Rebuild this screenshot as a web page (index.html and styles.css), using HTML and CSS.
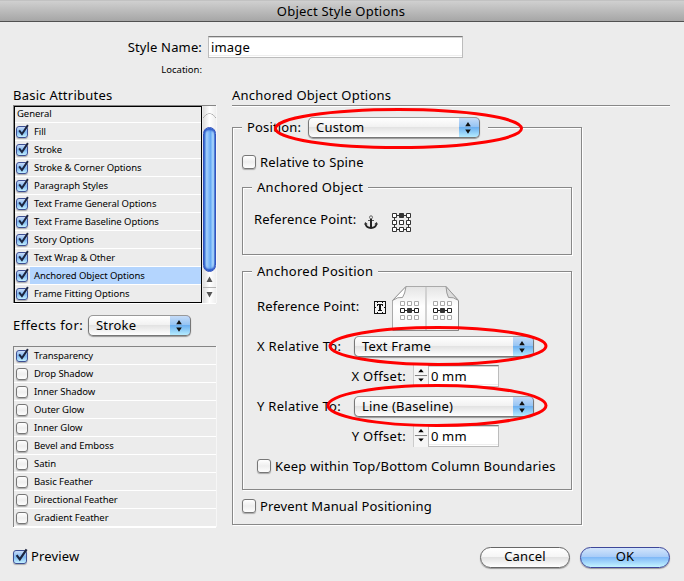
FILE: index.html
```html
<!DOCTYPE html>
<html lang="en">
<head>
<meta charset="utf-8">
<title>Object Style Options</title>
<link rel="stylesheet" href="styles.css">
</head>
<body>
<svg class="defs" width="0" height="0" aria-hidden="true">
  <defs>
    <linearGradient id="page" x1="0" y1="0" x2="0" y2="1"><stop offset="0" stop-color="#e4e4e4"/><stop offset=".45" stop-color="#fff"/><stop offset="1" stop-color="#f4f4f4"/></linearGradient>
    <symbol id="tick" viewBox="0 0 16 16"><path d="M3.6 7.200 6.800 11.400 13.600 1.300" fill="none" stroke="#1c2540" stroke-width="2.200"/></symbol>
    <symbol id="arrows" viewBox="0 0 20 20"><path d="M10 4l2.800 4.200H7.200zM10 15.800l2.800-4.200H7.200z" fill="#111"/></symbol>
    <symbol id="steps" viewBox="0 0 15 22"><path d="M7.500 3.500l2.900 3.400H4.600zM7.500 17l2.900-3.400H4.600z" fill="#000"/><path d="M1 10.500h13" stroke="#777"/></symbol>
  </defs>
</svg>
<header class="titlebar">Object Style Options</header>
<main class="dialog">
  <section class="naming">
    <label class="name-label">Style Name:</label><div class="field name-field">image</div>
    <span class="location">Location:</span>
  </section>
  <div class="columns">
    <aside class="side">
      <h2>Basic Attributes</h2>
      <div class="well attributes">
        <ul class="list focus">
          <li class="general">General</li>
          <li><i class="check small on"><svg><use href="#tick"/></svg></i><span>Fill</span></li>
          <li><i class="check small on"><svg><use href="#tick"/></svg></i><span>Stroke</span></li>
          <li><i class="check small on"><svg><use href="#tick"/></svg></i><span>Stroke &amp; Corner Options</span></li>
          <li><i class="check small on"><svg><use href="#tick"/></svg></i><span>Paragraph Styles</span></li>
          <li><i class="check small on"><svg><use href="#tick"/></svg></i><span>Text Frame General Options</span></li>
          <li><i class="check small on"><svg><use href="#tick"/></svg></i><span>Text Frame Baseline Options</span></li>
          <li><i class="check small on"><svg><use href="#tick"/></svg></i><span>Story Options</span></li>
          <li><i class="check small on"><svg><use href="#tick"/></svg></i><span>Text Wrap &amp; Other</span></li>
          <li class="selected"><i class="check small on"><svg><use href="#tick"/></svg></i><span>Anchored Object Options</span></li>
          <li><i class="check small on"><svg><use href="#tick"/></svg></i><span>Frame Fitting Options</span></li>
        </ul>
        <div class="scrollbar">
          <div class="cap"></div>
          <div class="thumb"></div>
          <svg class="scroll-arrows" width="13" height="31" viewBox="0 0 13 31"><path d="M0 15.500h13" stroke="#b5b5b5"/><path d="M6.500 4.500l3 5.500h-6zM6.500 25.500l3-5.500h-6z" fill="#555"/></svg>
        </div>
      </div>
      <div class="effects"><span>Effects for:</span><div class="select effect-select"><span>Stroke</span><b><svg><use href="#arrows"/></svg></b></div></div>
      <div class="well">
        <ul class="list">
          <li><i class="check small on"><svg><use href="#tick"/></svg></i><span>Transparency</span></li>
          <li><i class="check small"></i><span>Drop Shadow</span></li>
          <li><i class="check small"></i><span>Inner Shadow</span></li>
          <li><i class="check small"></i><span>Outer Glow</span></li>
          <li><i class="check small"></i><span>Inner Glow</span></li>
          <li><i class="check small"></i><span>Bevel and Emboss</span></li>
          <li><i class="check small"></i><span>Satin</span></li>
          <li><i class="check small"></i><span>Basic Feather</span></li>
          <li><i class="check small"></i><span>Directional Feather</span></li>
          <li><i class="check small"></i><span>Gradient Feather</span></li>
        </ul>
      </div>
    </aside>
    <section class="content">
      <h2 class="ruled">Anchored Object Options</h2>
      <fieldset class="outer">
        <legend class="position"><span>Position:</span><div class="select position-select"><span>Custom</span><b><svg><use href="#arrows"/></svg></b></div></legend>
        <div class="option spine"><i class="check"></i><span>Relative to Spine</span></div>
        <fieldset class="inner object">
          <legend>Anchored Object</legend>
          <div class="reference">
            <span>Reference Point:</span>
            <svg class="anchor" width="14" height="15" viewBox="0 0 14 15"><g fill="none" stroke="#222"><circle cx="7" cy="2.300" r="1.500" stroke="#666"/><path d="M4 5.500h6" stroke="#555"/><path d="M7 4v9" stroke-width="2"/><path d="M1.500 9Q2.500 12.800 7 13Q11.500 12.800 12.500 9" stroke-width="1.800"/></g><path d="M0 9.500L1.300 7l2.500 2.200zM14 9.500L12.700 7l-2.500 2.200z" fill="#333"/></svg>
            <svg class="points" width="19" height="19" viewBox="0 0 19 19"><path d="M2.500 2.500h14v14h-14zM9.500 2.500v0M9.500 14v5" fill="none" stroke="#333"/><g fill="#fff" stroke="#333"><path d="M.5.5h4v4h-4zM14.500.5h4v4h-4zM.5 7.500h4v4h-4zM7.500 7.500h4v4h-4zM14.500 7.500h4v4h-4zM.5 14.500h4v4h-4zM7.500 14.500h4v4h-4zM14.500 14.500h4v4h-4z"/><path d="M7.500.5h4v4h-4z" fill="#333"/></g></svg>
          </div>
        </fieldset>
        <fieldset class="inner placement">
          <legend>Anchored Position</legend>
          <div class="reference pages">
            <span>Reference Point:</span>
            <svg class="text-icon" width="12" height="13" viewBox="0 0 12 13"><rect x=".5" y=".5" width="11" height="12" fill="#f4f4f4" stroke="#111"/><path d="M3 1.500h1M8 1.500h1M3 11.500h1M8 11.500h1M1.500 6v1M10.500 6v1" stroke="#111"/><path d="M3 3h6v2H8V4H7v5h1v1H4V9h1V4H4v1H3z" fill="#111"/></svg>
            <svg class="spread" width="68" height="46" viewBox="0 0 68 46"><path d="M.5 14.500 14 .5h40l12.500 14v30H.5z" fill="url(#page)" stroke="#aaa"/><path d="M34 1v44" stroke="#d2d2d2" stroke-width="2"/><path d="M.5 14.500Q6 10.500 10.500 11.500Q13 8 14 .5z" fill="#fff" stroke="#999"/><path d="M66.500 14.500Q61 10.500 56.500 11.500Q54.500 8 54 .5z" fill="#ddd" stroke="#999"/><path d="M66.500 15v29.500H1" fill="none" stroke="#888"/>
              <g id="nine"><path d="M8.500 15.500h4v4h-4zM15.500 15.500h4v4h-4zM22.500 15.500h4v4h-4zM8.500 29.500h4v4h-4zM15.500 29.500h4v4h-4zM22.500 29.500h4v4h-4z" fill="#fff" stroke="#aaa"/><path d="M10 24.500h14" stroke="#222"/><path d="M8.500 22.500h4v4h-4zM22.500 22.500h4v4h-4z" fill="#fff" stroke="#222"/><path d="M15.500 22.500h4v4h-4z" fill="#333" stroke="#333"/></g>
              <use href="#nine" x="33"/></svg>
          </div>
          <div class="relative-row"><span>X Relative To:</span><div class="select wide"><span>Text Frame</span><b><svg><use href="#arrows"/></svg></b></div></div>
          <div class="offset-row"><span>X Offset:</span><svg class="stepper"><use href="#steps"/></svg><div class="field offset-field">0 mm</div></div>
          <div class="relative-row second"><span>Y Relative To:</span><div class="select wide"><span>Line (Baseline)</span><b><svg><use href="#arrows"/></svg></b></div></div>
          <div class="offset-row"><span>Y Offset:</span><svg class="stepper"><use href="#steps"/></svg><div class="field offset-field">0 mm</div></div>
          <div class="option keep"><i class="check"></i><span>Keep within Top/Bottom Column Boundaries</span></div>
        </fieldset>
        <div class="option prevent"><i class="check"></i><span>Prevent Manual Positioning</span></div>
      </fieldset>
    </section>
  </div>
  <footer>
    <div class="option preview"><i class="check on"><svg><use href="#tick"/></svg></i><span>Preview</span></div>
    <button>Cancel</button><button class="primary">OK</button>
  </footer>
</main>
<svg class="marks" width="684" height="581" viewBox="0 0 684 581" fill="none" stroke="#f00" stroke-width="3"><ellipse cx="398.500" cy="128.500" rx="123" ry="19"/><ellipse cx="438" cy="346" rx="108" ry="18.500"/><ellipse cx="437" cy="405.500" rx="109" ry="20"/></svg>
</body>
</html>
```
FILE: styles.css
```css
* { box-sizing: border-box; }
body {
  margin: 0;
  width: 684px;
  height: 581px;
  overflow: hidden;
  background: #ececec;
  color: #000;
  font: 13px/16px "Noto Sans", "Open Sans", sans-serif;
  letter-spacing: .15px;
}
svg { display: block; }
.defs { position: absolute; }
.titlebar {
  height: 22px;
  border-bottom: 1px solid #515151;
  background: linear-gradient(#d2d2d2, #a6a6a6);
  box-shadow: inset 0 1px #c2c2c2;
  text-align: center;
  line-height: 22px;
  padding-right: 2px;
  letter-spacing: .22px;
}
.naming {
  display: grid;
  grid-template-columns: 202px 255px;
  column-gap: 6px;
  height: 65px;
  padding-top: 14px;
  grid-template-rows: 22px 24px;
}
.name-label, .location { text-align: right; }
.name-label { line-height: 22px; }
.location { font-size: 9.5px; line-height: 24px; letter-spacing: 0; }
.field {
  height: 22px;
  padding-left: 2px;
  border: 1px solid #bcbcbc;
  border-top: 1px solid #7b7b7b;
  background: #fff;
  box-shadow: inset 0 1px #d5d5d5, inset 0 -1px #fff, inset 0 -2px #eee;
  line-height: 20px;
}
.columns { display: flex; gap: 16px; padding-left: 13px; }
.side { width: 203px; }
h2 { margin: 0; height: 18px; font-size: 13px; font-weight: normal; line-height: 17px; letter-spacing: .24px; }
.content { width: 438px; }
.ruled { height: 19px; border-bottom: 1px solid #888; box-shadow: 0 1px #fff; }
.well {
  display: flex;
  border-top: 1px solid #858585;
  border-left: 1px solid #858585;
  box-shadow: 0 1px #fff, 1px 0 #f6f6f6;
}
.list { flex: 1; margin: 0; padding: 0; list-style: none; font-size: 9.5px; letter-spacing: -.07px; }
.list li { display: flex; height: 18px; border-bottom: 1px solid #fff; line-height: 17px; }
.list li span { flex: 1; padding-left: 4px; }
.list li.general { height: 16px; padding-left: 2px; line-height: 14px; }
.list.focus { flex: none; width: 188px; height: 197px; border: 1px solid #000; }
.list.focus li:last-child { border: 0; }
.selected span { background: #b4d5fe; }
.check {
  flex: none;
  width: 14px;
  height: 14px;
  margin-top: 1px;
  border: 1px solid #777;
  border-radius: 3px;
  background: linear-gradient(#fff, #eee 50%, #fdfdfd);
  box-shadow: 0 1px 1px #aaa;
}
.check svg { width: 16px; height: 16px; margin: -3px 0 0 -1px; overflow: visible; }
.check.on { border-color: #3d4f94; background: linear-gradient(#c8dbf8, #7eb7f1 50%, #c3f0ff); }
.check.small { width: 12px; height: 12px; margin: 3px 2px 0 2px; }
.check.small svg { width: 14px; height: 14px; }
.focus .check.small { margin: 3px 2px 0 1px; }
.attributes { height: 198px; }
.scrollbar { width: 13px; margin-left: 1px; background: linear-gradient(90deg, #ddd, #fff 50%, #eee); }
.cap { height: 21px; background: radial-gradient(ellipse 9px 14px at 50% 100%, transparent 90%, #aaa 95%, transparent 100%); }
.thumb {
  height: 145px;
  border: 1px solid #3352bd;
  border-radius: 7px;
  background: linear-gradient(90deg, #4281d8, #a5cffa 25%, #75b3f7 50%, #66a9f5 60%, #b5dfff 85%, #568fdd);
  box-shadow: inset 0 2px 2px #2853c4, inset 0 -2px 2px #2853c4;
}
.effects { display: flex; height: 43px; padding-top: 12px; line-height: 21px; }
.effects > span { width: 75px; letter-spacing: .4px; }
.select {
  display: flex;
  height: 21px;
  border: 1px solid #777;
  border-top-color: #999;
  border-radius: 5px;
  background: linear-gradient(#fff, #f2f2f2 45%, #e3e3e3 50%, #fff);
  box-shadow: 0 1px 1px #999;
  line-height: 19px;
  overflow: hidden;
  letter-spacing: .2px;
}
.select span { flex: 1; padding-left: 7px; }
.select b {
  width: 21px;
  margin: -1px -1px -1px 0;
  border: 1px solid #3e51a8;
  border-left: 0;
  border-radius: 0 5px 5px 0;
  border-bottom-color: #65798f;
  background: linear-gradient(#c6dcf8, #93c3f3 48%, #6db0f0 50%, #b5ecff);
}
.select b svg { width: 20px; height: 20px; margin-left: -1px; }
.effect-select { width: 103px; }
.position-select { width: 172px; }
.wide { width: 180px; }
fieldset {
  min-width: 0;
  margin: 0;
  padding: 0;
  border: 1px solid #888;
  box-shadow: 1px 1px #fff, inset 1px 1px #fff;
}
legend { background: #ececec; }
.outer { width: 350px; height: 408px; margin-top: 11px; }
.position { display: flex; height: 21px; margin-left: 9px; padding: 0 8px 0 5px; line-height: 21px; }
.position > span { width: 61px; }
.option { display: flex; height: 16px; gap: 4px; line-height: 16px; }
.spine { margin: 16px 0 9px 9px; }
.inner { margin-left: 9px; width: 330px; }
.inner legend { height: 17px; margin-left: 9px; padding: 0 5px; line-height: 17px; letter-spacing: .28px; }
.object { height: 76px; }
.placement { height: 227px; margin-top: 8px; padding-left: 14px; }
.placement legend { margin-left: -5px; }
.reference { display: flex; line-height: 16px; }
.object .reference { padding: 15px 0 0 11px; }
.object .reference > span { width: 110px; }
.anchor { margin-top: 4px; }
.points { margin: 2px 0 0 14px; }
.pages { height: 51px; padding-top: 6px; }
.pages > span { width: 117px; line-height: 41px; }
.text-icon { margin-top: 15px; }
.spread { margin-left: 6px; }
.relative-row { display: flex; margin-top: 5px; line-height: 21px; }
.relative-row.second { margin-top: 9px; }
.relative-row > span { width: 97px; letter-spacing: .3px; }
.offset-row { display: flex; height: 22px; margin-top: 8px; line-height: 22px; }
.offset-row > span { width: 149px; margin-right: 7px; text-align: right; letter-spacing: .3px; }
.stepper { width: 15px; height: 22px; background: #f6f6f6; border-left: 1px solid #ccc; }
.offset-field { width: 71px; }
.keep { margin-top: 11px; letter-spacing: .21px; }
.prevent { margin: 8px 0 0 9px; }
footer { display: flex; height: 32px; margin-top: 19px; padding: 0 13px; }
.preview { width: 467px; gap: 4px; padding-top: 3px; height: 22px; }
.preview span { margin-top: -1px; }
button {
  width: 90px;
  height: 21px;
  margin: 1px 10px 0 0;
  padding: 0 0 2px;
  border: 1px solid #666;
  border-radius: 11px;
  background: linear-gradient(#fff, #f5f5f5 48%, #e2e2e2 50%, #fff);
  box-shadow: 0 1px 1px #999;
  color: #000;
  font: inherit;
  letter-spacing: .2px;
  line-height: 17px;
}
button.primary { margin-right: 0; border-color: #3e4799; background: linear-gradient(#d2e4fb, #a8ccf8 48%, #81b9f7 50%, #c3f4ff); }
.marks { position: absolute; inset: 0; }
```
